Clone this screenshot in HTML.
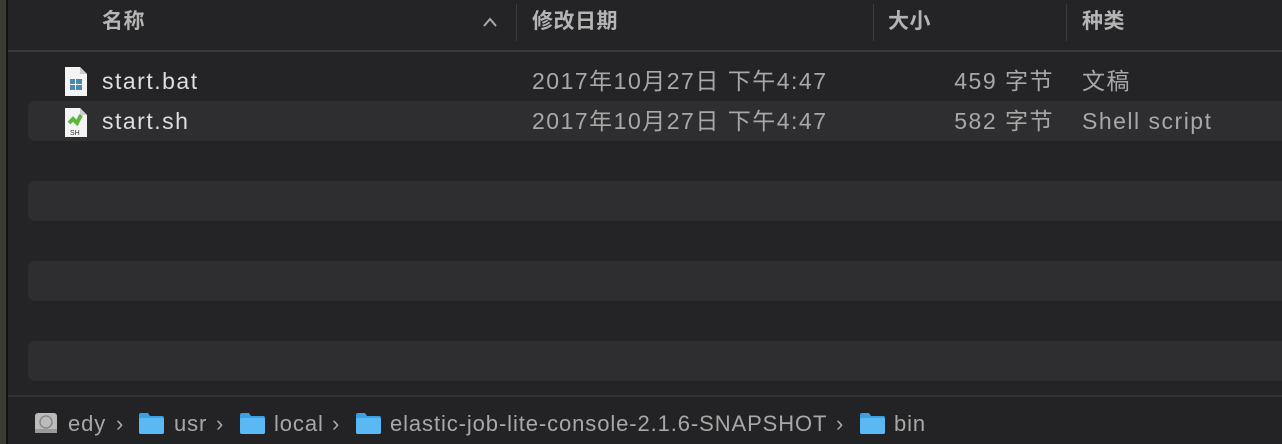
<!DOCTYPE html>
<html><head><meta charset="utf-8"><style>
*{margin:0;padding:0;box-sizing:border-box}
body{width:1282px;height:444px;background:#242426;position:relative;overflow:hidden;font-family:"Liberation Sans","Noto Sans CJK SC",sans-serif;}
.lb{position:absolute;left:0;top:0;width:6px;height:444px;background:#3b3a35}
.lb2{position:absolute;left:6px;top:0;width:2px;height:444px;background:#111}
.t{position:absolute;white-space:nowrap;line-height:26px}
.h{font-size:21px;color:#b4b4b4;font-weight:bold;top:9px;letter-spacing:0.5px}
.sep{position:absolute;top:4px;width:1px;height:37px;background:#3c3c3e}
.hl{position:absolute;left:8px;right:0;top:50px;height:2px;background:#3a3a3c}
.st{position:absolute;left:28px;right:0;height:40px;background:#2e2e30;border-radius:7px 0 0 7px}
.r{font-size:23px;color:#a8a8a8;letter-spacing:1.5px}
.n{color:#dedede}
.pl{position:absolute;left:8px;right:0;top:395px;height:2px;background:#333335}
.pb{position:absolute;left:8px;right:0;top:397px;bottom:0;background:#232325}
.p{font-size:22px;color:#a8a8a8;top:411px;letter-spacing:0.9px}
.f{position:absolute;top:413px;width:25px;height:21px}
</style></head><body>
<div class="lb"></div><div class="lb2"></div>
<div class="t h" style="left:102px">名称</div>
<svg class="t" style="left:482px;top:16px" width="16" height="12"><path d="M2 10L8 3L14 10" stroke="#aaa" stroke-width="2" fill="none"/></svg>
<div class="sep" style="left:516px"></div>
<div class="t h" style="left:532px">修改日期</div>
<div class="sep" style="left:873px"></div>
<div class="t h" style="left:888px">大小</div>
<div class="sep" style="left:1066px"></div>
<div class="t h" style="left:1082px">种类</div>
<div class="hl"></div>
<div class="st" style="top:101px"></div>
<div class="st" style="top:181px"></div>
<div class="st" style="top:261px"></div>
<div class="st" style="top:341px"></div>
<svg class="t" style="left:64px;top:66px" width="24" height="31"><path d="M1 1H16L23 8V30H1Z" fill="#f4f4f4"/><path d="M16 1V8H23" fill="#ccc"/><g fill="#4a8ab0"><rect x="6" y="13" width="5" height="5"/><rect x="12" y="13" width="6" height="5"/><rect x="6" y="19" width="5" height="5"/><rect x="12" y="19" width="6" height="5"/></g></svg>
<div class="t r n" style="left:102px;top:68px">start.bat</div>
<div class="t r" style="left:532px;top:68px">2017年10月27日 下午4:47</div>
<div class="t r" style="right:228px;top:68px">459 字节</div>
<div class="t r" style="left:1082px;top:68px">文稿</div>
<svg class="t" style="left:64px;top:107px" width="24" height="31"><path d="M1 1H16L23 8V30H1Z" fill="#f4f4f4"/><path d="M16 1V8H23" fill="#ccc"/><path d="M5 16L9 12L13 16L17 8" stroke="#5cb83c" stroke-width="4" fill="none"/><text x="6" y="28" font-size="7" fill="#333" font-family="Liberation Sans">SH</text></svg>
<div class="t r n" style="left:102px;top:108px">start.sh</div>
<div class="t r" style="left:532px;top:108px">2017年10月27日 下午4:47</div>
<div class="t r" style="right:228px;top:108px">582 字节</div>
<div class="t r" style="left:1082px;top:108px">Shell script</div>
<div class="pl"></div><div class="pb"></div>
<svg class="t" style="left:34px;top:411px" width="24" height="24"><rect x="1" y="2" width="22" height="20" rx="3" fill="#bbb"/><circle cx="12" cy="11" r="6" fill="none" stroke="#888" stroke-width="1.5"/><rect x="1" y="18" width="22" height="4" fill="#999"/></svg>
<div class="t p" style="left:68px">edy</div><div class="t p" style="left:116px">›</div>
<svg class="f" style="left:139px" viewBox="0 0 25 21"><path d="M0 2a2 2 0 0 1 2-2h7l2 3h12a2 2 0 0 1 2 2v14a2 2 0 0 1-2 2H2a2 2 0 0 1-2-2Z" fill="#3aa0e6"/><rect x="0" y="5" width="25" height="16" rx="2" fill="#5ab8f3"/></svg>
<div class="t p" style="left:174px">usr</div><div class="t p" style="left:216px">›</div>
<svg class="f" style="left:240px" viewBox="0 0 25 21"><path d="M0 2a2 2 0 0 1 2-2h7l2 3h12a2 2 0 0 1 2 2v14a2 2 0 0 1-2 2H2a2 2 0 0 1-2-2Z" fill="#3aa0e6"/><rect x="0" y="5" width="25" height="16" rx="2" fill="#5ab8f3"/></svg>
<div class="t p" style="left:274px">local</div><div class="t p" style="left:332px">›</div>
<svg class="f" style="left:356px" viewBox="0 0 25 21"><path d="M0 2a2 2 0 0 1 2-2h7l2 3h12a2 2 0 0 1 2 2v14a2 2 0 0 1-2 2H2a2 2 0 0 1-2-2Z" fill="#3aa0e6"/><rect x="0" y="5" width="25" height="16" rx="2" fill="#5ab8f3"/></svg>
<div class="t p" style="left:390px">elastic-job-lite-console-2.1.6-SNAPSHOT</div><div class="t p" style="left:836px">›</div>
<svg class="f" style="left:860px" viewBox="0 0 25 21"><path d="M0 2a2 2 0 0 1 2-2h7l2 3h12a2 2 0 0 1 2 2v14a2 2 0 0 1-2 2H2a2 2 0 0 1-2-2Z" fill="#3aa0e6"/><rect x="0" y="5" width="25" height="16" rx="2" fill="#5ab8f3"/></svg>
<div class="t p" style="left:894px">bin</div>
</body></html>
